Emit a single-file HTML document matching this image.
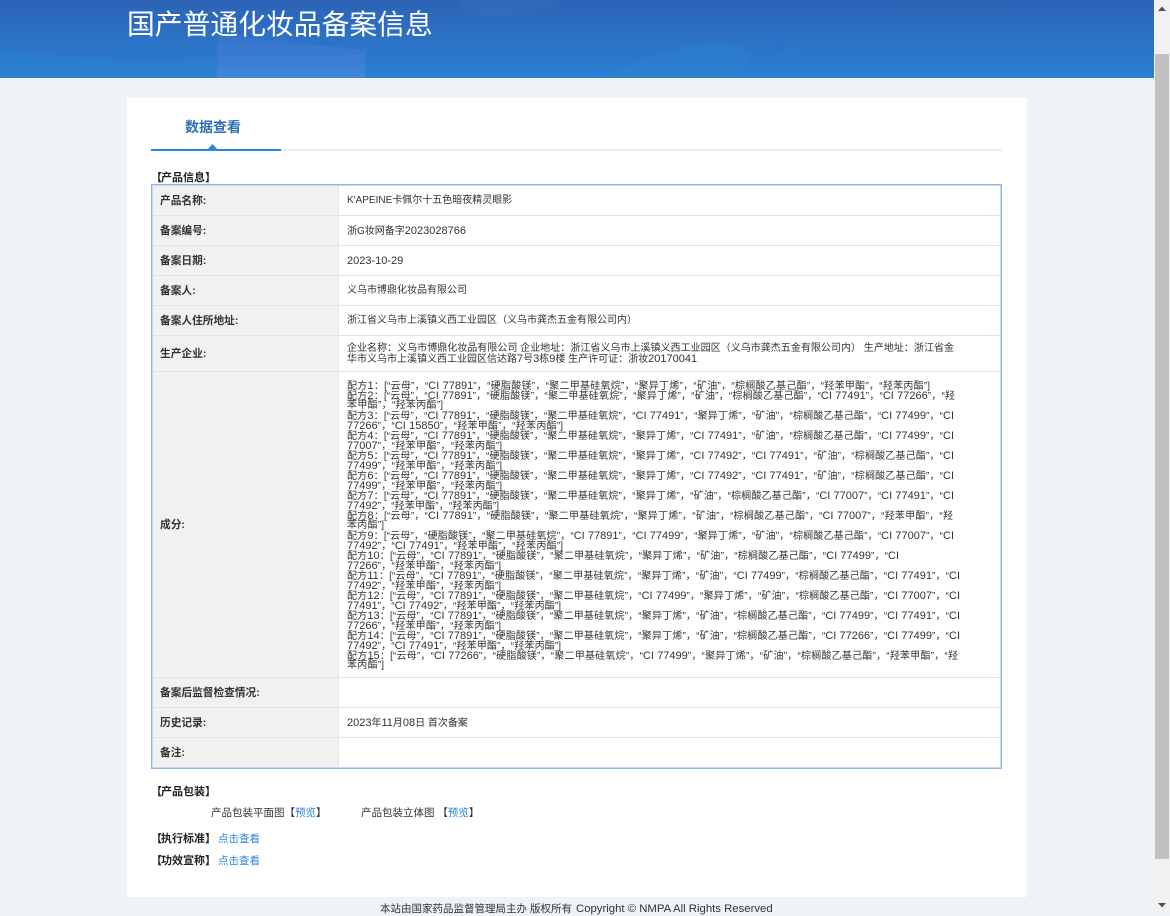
<!DOCTYPE html>
<html lang="zh-CN"><head><meta charset="utf-8"><title>国产普通化妆品备案信息</title>
<style>
html,body{margin:0;padding:0}
body{width:1170px;height:914px;overflow:hidden;position:relative;background:#eff3f6;font-family:"Liberation Sans","Noto Sans CJK SC",sans-serif;color:#333;font-size:10px}
div{position:absolute;box-sizing:border-box}
i{font-style:normal;font-size:11px}
s{text-decoration:none;margin-right:-1px}
.h{left:0;top:0;width:1154px;height:78px;background:linear-gradient(180deg,#2d63b6 0%,#2a80d3 100%);overflow:hidden}
.t{left:127px;top:6px;font-size:27.8px;line-height:38px;color:#fff;white-space:nowrap}
.card{left:127px;top:98px;width:900px;height:799px;background:#fff}
.lab{left:160px;font-weight:bold;font-size:10.7px;line-height:14px;white-space:nowrap;color:#333}
.val{left:347px;line-height:14px;white-space:nowrap}
.bg{left:152px;width:186px;background:#f1f1f1}
.hr{left:152px;width:849px;height:1px;background:#e3e3e3}
.l{left:347px;height:10px;line-height:10px;white-space:nowrap;text-align:justify;text-align-last:justify}
.sec{left:151px;font-weight:bold;font-size:11px;line-height:14px;white-space:nowrap;color:#222}
.a{color:#2a86d8}
.p{font-size:10.5px}
</style></head><body>
<div class="h">
<svg width="1154" height="78" style="position:absolute;left:0;top:0">
<defs><linearGradient id="g" x1="0" y1="0" x2="0" y2="1"><stop offset="0" stop-color="#3672c8"/><stop offset="1" stop-color="#3e86dc"/></linearGradient></defs>
<path d="M217 35 L365 50 L365 78 L217 78Z" fill="url(#g)"/>
<path d="M0 50 L130 62 L217 60 L217 78 L0 78Z" fill="#2f8ad8" opacity=".15"/>
<path d="M455 0 Q470 20 500 18 Q540 12 560 0Z" fill="#3a78c0" opacity=".25"/>
<path d="M600 78 Q660 50 710 42 Q750 42 748 62 Q742 72 730 78Z" fill="#2f83d2" opacity=".4"/>
<circle cx="780" cy="44" r="6" fill="#2b72cc"/><circle cx="793" cy="51" r="4" fill="#2878d2"/>
</svg>
<div class="t">国产普通化妆品备案信息</div>
</div>
<div class="card"></div>
<div style="left:185px;top:118px;font-size:14px;line-height:18px;font-weight:bold;color:#2f6fb5;white-space:nowrap">数据查看</div>
<div style="left:151px;top:149px;width:851px;height:2px;background:#eeeeee"></div>
<div style="left:151px;top:149px;width:130px;height:2px;background:#2a86d8"></div>
<svg width="12" height="6" style="position:absolute;left:207px;top:144px"><path d="M0 6L5.500 0L11 6Z" fill="#2a86d8"/></svg>
<div class="sec" style="top:171px">【<s></s>产品信息】</div>
<div class="bg" style="top:186px;height:581px"></div>
<div style="left:338px;top:186px;width:1px;height:581px;background:#e3e3e3"></div>
<div class="hr" style="top:215px"></div><div class="hr" style="top:245px"></div><div class="hr" style="top:275px"></div><div class="hr" style="top:305px"></div><div class="hr" style="top:335px"></div><div class="hr" style="top:371px"></div><div class="hr" style="top:677px"></div><div class="hr" style="top:707px"></div><div class="hr" style="top:737px"></div>
<div style="left:151px;top:184px;width:851px;height:585px;border:1px solid #8fb6ea;box-shadow:inset 0 0 0 1px #c6daf5"></div>
<div class="lab" style="top:194px">产品名称:</div>
<div class="lab" style="top:224px">备案编号:</div>
<div class="lab" style="top:254px">备案日期:</div>
<div class="lab" style="top:284px">备案人:</div>
<div class="lab" style="top:314px">备案人住所地址:</div>
<div class="lab" style="top:347px">生产企业:</div>
<div class="lab" style="top:518px">成分:</div>
<div class="lab" style="top:686px">备案后监督检查情况:</div>
<div class="lab" style="top:716px">历史记录:</div>
<div class="lab" style="top:746px">备注:</div>
<div class="val" style="top:194px">K'APEINE卡佩尔十五色暗夜精灵眼影</div>
<div class="val" style="top:224px">浙G妆网备字<i>2023028766</i></div>
<div class="val" style="top:254px"><i>2023-10-29</i></div>
<div class="val" style="top:284px">义乌市博鼎化妆品有限公司</div>
<div class="val" style="top:314px">浙江省义乌市上溪镇义西工业园区（义乌市龚杰五金有限公司内）</div>
<div class="l" style="top:344px;width:607px">企业名称：义乌市博鼎化妆品有限公司 企业地址：浙江省义乌市上溪镇义西工业园区（义乌市龚杰五金有限公司内） 生产地址：浙江省金</div>
<div class="l" style="top:354px;width:347px">华市义乌市上溪镇义西工业园区信达路<i>7</i>号<i>3</i>栋<i>9</i>楼 生产许可证：浙妆<i>20170041</i></div>
<div class="l" style="top:381px;width:583px">配方<i>1</i>：[“云母”，“<i>CI 77891</i>”，“硬脂酸镁”，“聚二甲基硅氧烷”，“聚异丁烯”，“矿油”，“棕榈酸乙基己酯”，“羟苯甲酯”，“羟苯丙酯”]</div>
<div class="l" style="top:391px;width:608px">配方<i>2</i>：[“云母”，“<i>CI 77891</i>”，“硬脂酸镁”，“聚二甲基硅氧烷”，“聚异丁烯”，“矿油”，“棕榈酸乙基己酯”，“<i>CI 77491</i>”，“<i>CI 77266</i>”，“羟</div>
<div class="l" style="top:401px;width:96px">苯甲酯”，“羟苯丙酯”]</div>
<div class="l" style="top:411px;width:607px">配方<i>3</i>：[“云母”，“<i>CI 77891</i>”，“硬脂酸镁”，“聚二甲基硅氧烷”，“<i>CI 77491</i>”，“聚异丁烯”，“矿油”，“棕榈酸乙基己酯”，“<i>CI 77499</i>”，“<i>CI</i></div>
<div class="l" style="top:421px;width:216px"><i>77266</i>”，“<i>CI 15850</i>”，“羟苯甲酯”，“羟苯丙酯”]</div>
<div class="l" style="top:431px;width:607px">配方<i>4</i>：[“云母”，“<i>CI 77891</i>”，“硬脂酸镁”，“聚二甲基硅氧烷”，“聚异丁烯”，“<i>CI 77491</i>”，“矿油”，“棕榈酸乙基己酯”，“<i>CI 77499</i>”，“<i>CI</i></div>
<div class="l" style="top:441px;width:155px"><i>77007</i>”，“羟苯甲酯”，“羟苯丙酯”]</div>
<div class="l" style="top:451px;width:607px">配方<i>5</i>：[“云母”，“<i>CI 77891</i>”，“硬脂酸镁”，“聚二甲基硅氧烷”，“聚异丁烯”，“<i>CI 77492</i>”，“<i>CI 77491</i>”，“矿油”，“棕榈酸乙基己酯”，“<i>CI</i></div>
<div class="l" style="top:461px;width:155px"><i>77499</i>”，“羟苯甲酯”，“羟苯丙酯”]</div>
<div class="l" style="top:471px;width:607px">配方<i>6</i>：[“云母”，“<i>CI 77891</i>”，“硬脂酸镁”，“聚二甲基硅氧烷”，“聚异丁烯”，“<i>CI 77492</i>”，“<i>CI 77491</i>”，“矿油”，“棕榈酸乙基己酯”，“<i>CI</i></div>
<div class="l" style="top:481px;width:155px"><i>77499</i>”，“羟苯甲酯”，“羟苯丙酯”]</div>
<div class="l" style="top:491px;width:607px">配方<i>7</i>：[“云母”，“<i>CI 77891</i>”，“硬脂酸镁”，“聚二甲基硅氧烷”，“聚异丁烯”，“矿油”，“棕榈酸乙基己酯”，“<i>CI 77007</i>”，“<i>CI 77491</i>”，“<i>CI</i></div>
<div class="l" style="top:501px;width:152px"><i>77492</i>”，“羟苯甲酯”，“羟苯丙酯”]</div>
<div class="l" style="top:511px;width:606px">配方<i>8</i>：[“云母”，“<i>CI 77891</i>”，“硬脂酸镁”，“聚二甲基硅氧烷”，“聚异丁烯”，“矿油”，“棕榈酸乙基己酯”，“<i>CI 77007</i>”，“羟苯甲酯”，“羟</div>
<div class="l" style="top:521px;width:37px">苯丙酯”]</div>
<div class="l" style="top:531px;width:607px">配方<i>9</i>：[“云母”，“硬脂酸镁”，“聚二甲基硅氧烷”，“<i>CI 77891</i>”，“<i>CI 77499</i>”，“聚异丁烯”，“矿油”，“棕榈酸乙基己酯”，“<i>CI 77007</i>”，“<i>CI</i></div>
<div class="l" style="top:541px;width:216px"><i>77492</i>”，“<i>CI 77491</i>”，“羟苯甲酯”，“羟苯丙酯”]</div>
<div class="l" style="top:551px;width:552px">配方<i>10</i>：[“云母”，“<i>CI 77891</i>”，“硬脂酸镁”，“聚二甲基硅氧烷”，“聚异丁烯”，“矿油”，“棕榈酸乙基己酯”，“<i>CI 77499</i>”，“<i>CI</i></div>
<div class="l" style="top:561px;width:154px"><i>77266</i>”，“羟苯甲酯”，“羟苯丙酯”]</div>
<div class="l" style="top:571px;width:613px">配方<i>11</i>：[“云母”，“<i>CI 77891</i>”，“硬脂酸镁”，“聚二甲基硅氧烷”，“聚异丁烯”，“矿油”，“<i>CI 77499</i>”，“棕榈酸乙基己酯”，“<i>CI 77491</i>”，“<i>CI</i></div>
<div class="l" style="top:581px;width:154px"><i>77492</i>”，“羟苯甲酯”，“羟苯丙酯”]</div>
<div class="l" style="top:591px;width:613px">配方<i>12</i>：[“云母”，“<i>CI 77891</i>”，“硬脂酸镁”，“聚二甲基硅氧烷”，“<i>CI 77499</i>”，“聚异丁烯”，“矿油”，“棕榈酸乙基己酯”，“<i>CI 77007</i>”，“<i>CI</i></div>
<div class="l" style="top:601px;width:214px"><i>77491</i>”，“<i>CI 77492</i>”，“羟苯甲酯”，“羟苯丙酯”]</div>
<div class="l" style="top:611px;width:613px">配方<i>13</i>：[“云母”，“<i>CI 77891</i>”，“硬脂酸镁”，“聚二甲基硅氧烷”，“聚异丁烯”，“矿油”，“棕榈酸乙基己酯”，“<i>CI 77499</i>”，“<i>CI 77491</i>”，“<i>CI</i></div>
<div class="l" style="top:621px;width:154px"><i>77266</i>”，“羟苯甲酯”，“羟苯丙酯”]</div>
<div class="l" style="top:631px;width:613px">配方<i>14</i>：[“云母”，“<i>CI 77891</i>”，“硬脂酸镁”，“聚二甲基硅氧烷”，“聚异丁烯”，“矿油”，“棕榈酸乙基己酯”，“<i>CI 77266</i>”，“<i>CI 77499</i>”，“<i>CI</i></div>
<div class="l" style="top:641px;width:214px"><i>77492</i>”，“<i>CI 77491</i>”，“羟苯甲酯”，“羟苯丙酯”]</div>
<div class="l" style="top:651px;width:611px">配方<i>15</i>：[“云母”，“<i>CI 77266</i>”，“硬脂酸镁”，“聚二甲基硅氧烷”，“<i>CI 77499</i>”，“聚异丁烯”，“矿油”，“棕榈酸乙基己酯”，“羟苯甲酯”，“羟</div>
<div class="l" style="top:661px;width:37px">苯丙酯”]</div>
<div class="val" style="top:716px"><i>2023</i>年<i>11</i>月<i>08</i>日 首次备案</div>
<div class="sec" style="top:785px">【<s></s>产品包装】</div>
<div class="val p" style="left:211px;top:806px">产品包装平面图【<span class="a">预览</span>】</div>
<div class="val p" style="left:361px;top:806px">产品包装立体图 【<span class="a">预览</span>】</div>
<div class="sec" style="top:832px">【<s></s>执行标准】</div>
<div class="val a p" style="left:218px;top:832px">点击查看</div>
<div class="sec" style="top:854px">【<s></s>功效宣称】</div>
<div class="val a p" style="left:218px;top:854px">点击查看</div>
<div style="left:380px;top:902px;width:192px;line-height:14px;font-size:10.5px;white-space:nowrap;text-align-last:justify">本站由国家药品监督管理局主办 版权所有</div>
<div style="left:576px;top:902px;line-height:14px;font-size:11.35px;white-space:nowrap">Copyright © NMPA All Rights Reserved</div>
<div style="left:1154px;top:0;width:16px;height:914px;background:#f1f1f1"></div>
<div style="left:1155px;top:54px;width:14px;height:805px;background:#c1c1c1"></div>
<svg width="16" height="914" style="position:absolute;left:1154px;top:0"><path d="M4 11L8 6.500L12 11Z" fill="#505050"/><path d="M4 903L8 907.500L12 903Z" fill="#505050"/></svg>
</body></html>
